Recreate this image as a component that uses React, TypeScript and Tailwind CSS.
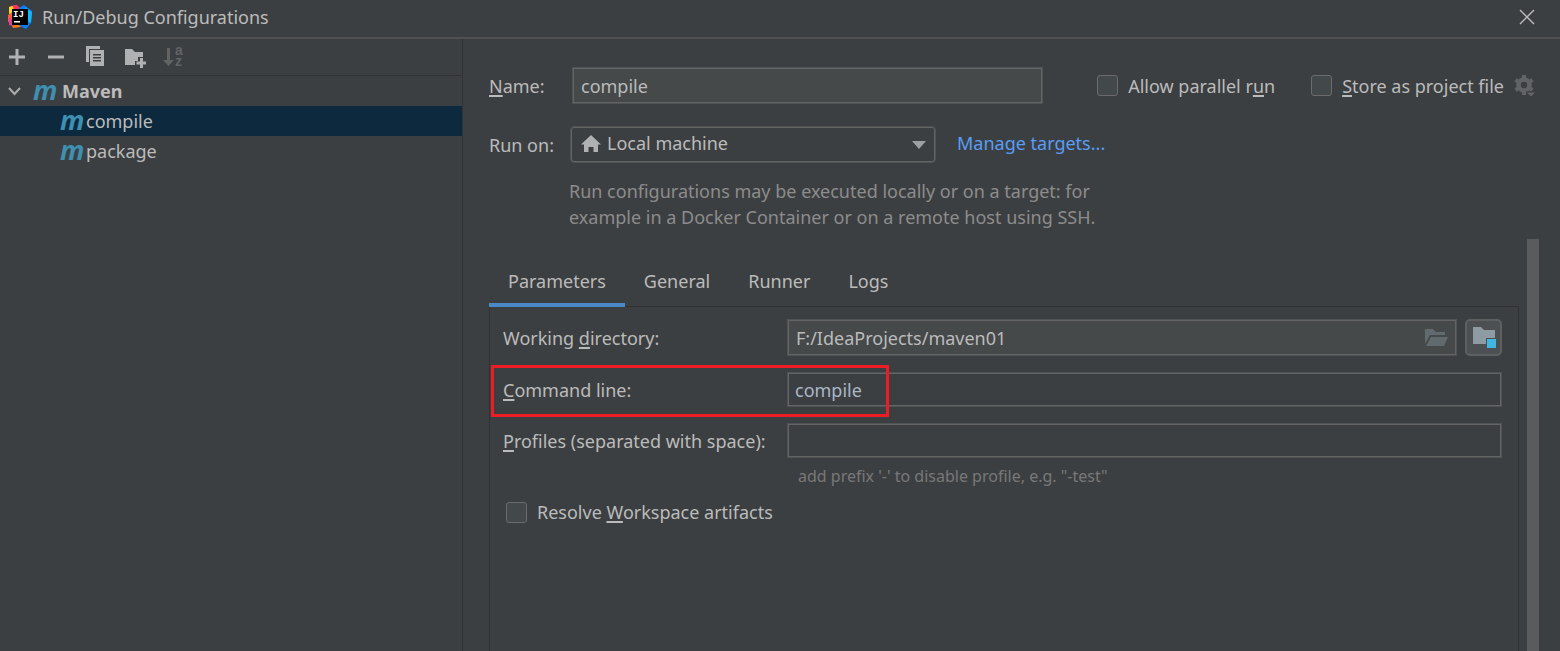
import { useState } from 'react';
import type { ReactNode } from 'react';

const field = 'w-full min-w-0 border border-[#505354] text-lg inset-ring inset-ring-[#646464] outline-none';
const toolBtn = 'flex h-6 w-6 items-center justify-center';

const tabs = ['Parameters', 'General', 'Runner', 'Logs'];

// mnemonic letter of a label
function U({ children }: { children: ReactNode }) {
  return <span className="underline decoration-2 underline-offset-2">{children}</span>;
}

function IdeaLogo() {
  return (
    <svg width="24" height="24" viewBox="0 0 24 24">
      <path d="M1 3 7 0l5 3-3 12-9 2 2-6z" fill="#fc801d" />
      <path d="M2 1l7-1 4 4-8 6-4-4z" fill="#fe315d" />
      <path d="M1 2l4-1 1 6-5 2z" fill="#f9d423" />
      <path d="M0 10l5-3 1 10-6-1z" fill="#fb5a3c" />
      <path d="M11 3l5-3 8 6-1 12-5 6-8-4z" fill="#087cfa" />
      <path d="M17 2l7 5-1 11-5-3z" fill="#18b4f8" />
      <path d="M2 17l8 2 3 3-8 1z" fill="#f97a12" />
      <path d="M1 13l4 1 1 7-5-1z" fill="#e0409a" />
      <rect x="4" y="4" width="16" height="16" fill="#000" />
      <text x="5" y="12" fill="#fff" fontSize="9" fontWeight="700" fontFamily="Liberation Mono, monospace">IJ</text>
      <rect x="6" y="16" width="6" height="1.5" fill="#fff" />
    </svg>
  );
}

function MavenIcon() {
  return <span className="w-6 pb-[3px] font-['Noto_Sans'] text-[27px] leading-[20px] font-bold text-[#3e8fb0] italic">m</span>;
}

function Check({ id, checked, onChange, children }: { id: string; checked: boolean; onChange: (v: boolean) => void; children: ReactNode }) {
  return (
    <div className="flex items-center gap-2.5 whitespace-nowrap">
      <input id={id} type="checkbox" checked={checked} onChange={(e) => onChange(e.target.checked)}
        className="h-[21px] w-[21px] shrink-0 appearance-none rounded-[3px] border border-[#6b6b6b] bg-[#43494a] checked:bg-[#4a88c7]" />
      <label htmlFor={id}>{children}</label>
    </div>
  );
}

export default function App() {
  const [tab, setTab] = useState('Parameters');
  const [selected, setSelected] = useState('compile');
  const [name, setName] = useState('compile');
  const [dir, setDir] = useState('F:/IdeaProjects/maven01');
  const [command, setCommand] = useState('compile');
  const [profiles, setProfiles] = useState('');
  const [parallel, setParallel] = useState(false);
  const [store, setStore] = useState(false);
  const [resolve, setResolve] = useState(false);

  return (
    <div className="flex min-h-screen flex-col bg-[#3c3f41] font-['Noto_Sans',sans-serif] text-lg text-[#bbbbbb]">
      <header className="flex h-[39px] items-center gap-2.5 border-b-2 border-[#515151] pr-6 pb-1 pl-2">
        <IdeaLogo />
        <h1 className="flex-1 text-lg">Run/Debug Configurations</h1>
        <button aria-label="Close">
          <svg width="18" height="18" viewBox="0 0 18 18" stroke="#bbbbbb" strokeWidth="1.4">
            <path d="M2 2l14 14M16 2 2 16" />
          </svg>
        </button>
      </header>

      <div className="flex flex-1">
        <aside className="w-[463px] shrink-0 border-r border-[#323232]">
          <div className="flex h-[37px] items-center gap-[15px] border-b border-[#323232] pl-[5px]">
            <button aria-label="Add" className={toolBtn}>
              <svg width="24" height="24" fill="#afb1b3"><path d="M10.500 4h3v6.500h6.500v3h-6.500V20h-3v-6.500H4v-3h6.500z" /></svg>
            </button>
            <button aria-label="Remove" className={toolBtn}>
              <svg width="24" height="24" fill="#afb1b3"><path d="M4 10.500h16v3H4z" /></svg>
            </button>
            <button aria-label="Copy" className={toolBtn}>
              <svg width="24" height="24" fill="#afb1b3">
                <path d="M3 1h14v3H6v13H3z" />
                <path fillRule="evenodd" d="M7 5h14v16H7zM10 9v1.500h8V9zm0 3v1.500h8V12zm0 3v1.500h8V15z" />
              </svg>
            </button>
            <button aria-label="New folder" className={toolBtn}>
              <svg width="24" height="24" fill="#afb1b3">
                <path d="M3 4h7l3 3h8v5h-5v4h-3v4H3z" />
                <path d="M18 13h3v3.500h3.500v3H21V23h-3v-3.500h-3.500v-3H18z" />
              </svg>
            </button>
            <button aria-label="Sort" className={toolBtn}>
              <svg className="overflow-visible" width="24" height="24" fill="#616365" fontFamily="Liberation Sans, sans-serif">
                <path d="M6 3h3v12h4l-5.500 6L2 15h4z" />
                <text x="14" y="10" fontSize="14" fontWeight="700">a</text>
                <text x="14" y="21" fontSize="14" fontWeight="700">z</text>
              </svg>
            </button>
          </div>
          <ul>
            <li className="flex h-[30px] items-center pl-2">
              <svg width="13" height="12" viewBox="0 0 13 12" fill="none" stroke="#adadad" strokeWidth="2">
                <path d="M1 3l5.500 6L12 3" />
              </svg>
              <span className="ml-3 flex items-center gap-[5px] font-bold"><MavenIcon />Maven</span>
            </li>
            {['compile', 'package'].map((c) => (
              <li key={c}>
                <button onClick={() => setSelected(c)}
                  className={`flex h-[30px] w-full items-center gap-[2px] pl-[60px] ${selected === c ? 'bg-[#0d293e]' : ''}`}>
                  <MavenIcon />{c}
                </button>
              </li>
            ))}
          </ul>
        </aside>

        <main className="flex min-w-0 flex-1 flex-col pt-7 pl-[26px]">
          <div className="flex items-center pr-6">
            <label htmlFor="name" className="w-[83px] shrink-0"><U>N</U>ame:</label>
            <input id="name" value={name} onChange={(e) => setName(e.target.value)} className={`${field} h-[37px] flex-1 bg-[#45494a] px-2`} />
            <div className="ml-[54px] flex shrink-0 items-center">
              <Check id="parallel" checked={parallel} onChange={setParallel}>Allow parallel r<U>u</U>n</Check>
              <div className="ml-9">
                <Check id="store" checked={store} onChange={setStore}><U>S</U>tore as project file</Check>
              </div>
              <button aria-label="Storage options" className="ml-2.5">
                <svg width="22" height="24" viewBox="0 0 22 24">
                  <circle cx="10" cy="11" r="5.500" fill="none" stroke="#616365" strokeWidth="4.500" />
                  <path d="M10 1v4M10 17v4M1.500 6l3.500 2M15 14l3.500 2M1.500 16l3.500-2M15 8l3.500-2" stroke="#616365" strokeWidth="4" />
                  <path d="M12 18h10l-5 5z" fill="#616365" stroke="#3c3f41" />
                </svg>
              </button>
            </div>
          </div>

          <div className="mt-[22px] flex items-center">
            <label htmlFor="target" className="w-[81px] shrink-0">Run on:</label>
            <div className="relative w-[366px]">
              <select id="target" className="h-[37px] w-full appearance-none rounded-[4px] border border-[#505354] bg-[#3c3f41] pb-1 pl-9 inset-ring inset-ring-[#646464] outline-none">
                <option>Local machine</option>
              </select>
              <svg className="pointer-events-none absolute top-[9px] left-[10px]" width="22" height="18" viewBox="0 0 22 18" fill="#afb1b3">
                <path d="M11 0l10 9.500h-3V17h-4.500v-5h-5v5H4V9.500H1z" />
              </svg>
              <svg className="pointer-events-none absolute top-[15px] right-[10px]" width="14" height="8" fill="#9da0a2">
                <path d="M0 0h14L7 8z" />
              </svg>
            </div>
            <a href="#targets" className="ml-[21px] pb-1 text-[#589df6]">Manage targets...</a>
          </div>
          <p className="mt-[15px] ml-20 max-w-[560px] leading-[26px] text-[#8c8c8c]">
            Run configurations may be executed locally or on a target: for<br />
            example in a Docker Container or on a remote host using SSH.
          </p>

          <div className="mt-[9px] flex flex-1">
            <div className="flex min-w-0 flex-1 flex-col pt-5">
              <div role="tablist" className="flex border-b border-[#323232]">
                {tabs.map((t) => (
                  <button key={t} role="tab" aria-selected={tab === t} onClick={() => setTab(t)}
                    className={`-mb-px h-12 border-b-4 px-[19px] ${tab === t ? 'border-[#4a88c7]' : 'border-transparent'}`}>
                    {t}
                  </button>
                ))}
              </div>
              <div className="flex-1 border-x border-[#323232] pt-3 pr-4 pl-[13px]">
                <div className="grid grid-cols-[284px_1fr] items-center gap-y-4">
                  <label htmlFor="dir">Working <U>d</U>irectory:</label>
                  <div className="flex gap-2">
                    <div className="relative flex-1">
                      <input id="dir" value={dir} onChange={(e) => setDir(e.target.value)} className={`${field} h-[37px] bg-[#45494a] px-2`} />
                      <button aria-label="Browse" className="absolute top-[10px] right-2">
                        <svg width="24" height="18" viewBox="0 0 24 18" fill="#616a6e">
                          <path d="M0 0h8l3 3h9v3H5L0 15z" />
                          <path d="M6 8h17l-4 9H1z" />
                        </svg>
                      </button>
                    </div>
                    <button aria-label="Insert macro" className="flex h-[37px] w-[37px] items-center justify-center rounded-[5px] border-2 border-[#5e6060] bg-[#4c5052]">
                      <svg width="24" height="22" viewBox="0 0 24 22">
                        <path d="M1 0h8l3 3h11v8h-9v6H1z" fill="#8f9ba3" />
                        <rect x="15" y="12" width="9" height="9" fill="#40b6e0" />
                      </svg>
                    </button>
                  </div>

                  <div className="relative">
                    <label htmlFor="command"><U>C</U>ommand line:</label>
                    <div className="pointer-events-none absolute -top-[11px] -left-[12px] h-[52px] w-[398px] border-3 border-[#ee1c25]" />
                  </div>
                  <input id="command" value={command} onChange={(e) => setCommand(e.target.value)} className={`${field} h-[35px] px-[7px] text-[#a9b7c6]`} />

                  <label htmlFor="profiles"><U>P</U>rofiles (separated with space):</label>
                  <input id="profiles" value={profiles} onChange={(e) => setProfiles(e.target.value)} className={`${field} h-[35px] px-[7px] text-[#a9b7c6]`} />
                </div>
                <p className="mt-1.5 ml-[295px] text-base text-[#787878]">add prefix '-' to disable profile, e.g. "-test"</p>
                <div className="mt-2.5 ml-[3px]">
                  <Check id="resolve" checked={resolve} onChange={setResolve}>Resolve <U>W</U>orkspace artifacts</Check>
                </div>
              </div>
            </div>
            <div className="mr-[21px] ml-2 w-3 bg-[#595b5d]" />
          </div>
        </main>
      </div>
    </div>
  );
}
